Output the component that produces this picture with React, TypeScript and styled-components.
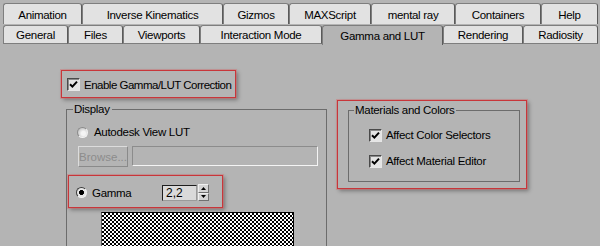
import React from 'react';
import styled, { createGlobalStyle } from 'styled-components';

const GlobalStyle = createGlobalStyle`
  html, body {
    margin: 0;
    padding: 0;
    background: #b4b4b4;
  }
  body {
    font-family: "Liberation Sans", Arial, sans-serif;
    font-size: 11px;
    letter-spacing: -0.3px;
    color: #000;
  }
`;

const Window = styled.div`
  width: 600px;
  height: 246px;
  overflow: hidden;
  box-sizing: border-box;
  padding-top: 3px;
  background: #b4b4b4;
  display: flex;
  flex-direction: column;
`;

const TabRow = styled.div<{ $h: number }>`
  display: flex;
  align-items: flex-end;
  padding-left: 3px;
  height: ${p => p.$h}px;
  flex: none;
  position: relative;
`;

const Tab = styled.div<{ $w: number; $active?: boolean; $bottom?: boolean }>`
  width: ${p => p.$w}px;
  height: ${p => (p.$active ? '100%' : p.$bottom ? 'calc(100% - 1px)' : '100%')};
  box-sizing: border-box;
  display: flex;
  align-items: center;
  justify-content: center;
  padding-top: 1px;
  font-size: 11.5px;
  background: ${p => (p.$active ? '#b4b4b4' : '#e2e2e2')};
  border: 1px solid #7e7e7e;
  border-right-color: #5a5a5a;
  border-bottom: ${p => (p.$bottom && !p.$active ? '1px solid #7e7e7e' : 'none')};
  border-radius: 3px 3px 0 0;
  margin-bottom: ${p => (p.$active ? '-1px' : '0')};
  position: relative;
  z-index: ${p => (p.$active ? 1 : 0)};
  white-space: nowrap;
`;

const Content = styled.div`
  flex: 1;
  display: flex;
  align-items: flex-start;
  padding: 26px 0 0 61px;
`;

const LeftColumn = styled.div`
  width: 266px;
  display: flex;
  flex-direction: column;
`;

const RightColumn = styled.div`
  margin: 30px 0 0 10px;
`;

const Highlight = styled.div<{ $w: number; $h: number }>`
  width: ${p => p.$w}px;
  height: ${p => p.$h}px;
  box-sizing: border-box;
  border: 1px solid #c8363a;
  box-shadow: 0 0 0 1px rgba(214, 110, 112, 0.45), 2px 2px 4px rgba(0, 0, 0, 0.35);
  white-space: nowrap;
`;

const EnableBox = styled(Highlight)`
  display: flex;
  align-items: center;
  gap: 4px;
  padding-left: 5px;
  padding-top: 1px;
  font-size: 11.5px;
  letter-spacing: -0.5px;
`;

const Box = styled.span`
  width: 13px;
  height: 13px;
  flex: none;
  box-sizing: border-box;
  border: 1px solid;
  border-color: #4a4a4a #e6e6e6 #e6e6e6 #4a4a4a;
  background: #e4e4e4;
  box-shadow: inset 1px 1px 0 #8a8a8a;
  display: flex;
  align-items: center;
  justify-content: center;
`;

const Check = () => (
  <Box>
    <svg width="9" height="9" viewBox="0 0 9 9">
      <path d="M1 4.2 L3.4 6.6 L8 1.6" fill="none" stroke="#000" strokeWidth="2" />
    </svg>
  </Box>
);

const RadioDot = styled.span<{ $on?: boolean }>`
  width: 11px;
  height: 11px;
  flex: none;
  box-sizing: border-box;
  border-radius: 50%;
  border: 1px solid ${p => (p.$on ? '#3c3c3c' : '#8c8c8c')};
  border-right-color: #f2f2f2;
  border-bottom-color: #f2f2f2;
  background: ${p =>
    p.$on
      ? 'radial-gradient(circle, #000 0 2.2px, #e8e8e8 2.7px)'
      : 'radial-gradient(circle at 60% 60%, #f4f4f4 0 2px, #cfcfcf 5px)'};
`;

const Group = styled.fieldset<{ $w: number }>`
  width: ${p => p.$w}px;
  box-sizing: border-box;
  margin: 0;
  padding: 0;
  border: 1px solid #6c6c6c;
  min-inline-size: 0;
`;

const Legend = styled.legend`
  margin-left: 5px;
  padding: 0 2px 0 1px;
  line-height: 13px;
  font-size: 11.5px;
`;

const DisplayGroup = styled(Group)`
  margin: 5px 0 0 5px;
  height: 160px;
  padding-left: 1px;
`;

const RadioRow = styled.div`
  display: flex;
  align-items: center;
  gap: 6px;
  height: 16px;
  margin: 8px 0 0 9px;
  font-size: 11.5px;
`;

const BrowseRow = styled.div`
  display: flex;
  align-items: flex-start;
  gap: 4px;
  margin: 6px 0 0 10px;
`;

const BrowseButton = styled.div`
  width: 50px;
  height: 21px;
  box-sizing: border-box;
  border: 1px solid;
  border-color: #dcdcdc #8a8a8a #8a8a8a #dcdcdc;
  color: #8c8c8c;
  font-size: 11.5px;
  display: flex;
  align-items: center;
  justify-content: center;
  letter-spacing: 0;
`;

const PathField = styled.div`
  width: 186px;
  height: 20px;
  box-sizing: border-box;
  border: 1px solid;
  border-color: #8c8c8c #f4f4f4 #f4f4f4 #8c8c8c;
`;

const GammaBox = styled(Highlight)`
  margin: 8px 0 0 0;
  display: flex;
  align-items: center;
  padding: 2px 0 0 7px;
  font-size: 11.5px;
`;

const GammaLabel = styled.span`
  margin-left: 5px;
  width: 70px;
`;

const SpinInput = styled.div`
  width: 35px;
  height: 16px;
  box-sizing: border-box;
  border: 1px solid;
  border-color: #1e1e1e #9a9a9a #9a9a9a #1e1e1e;
  background: #dadada;
  font-size: 12px;
  line-height: 14px;
  padding-left: 3px;
  letter-spacing: 0;
`;

const Spinner = styled.div`
  width: 11px;
  height: 17px;
  margin-left: 1px;
  display: flex;
  flex-direction: column;
`;

const SpinButton = styled.div`
  flex: 1;
  box-sizing: border-box;
  background: #d4d4d4;
  border: 1px solid;
  border-color: #f0f0f0 #707070 #707070 #f0f0f0;
  display: flex;
  align-items: center;
  justify-content: center;
`;

const Checker = styled.div`
  width: 193px;
  height: 40px;
  margin: 4px 0 0 33px;
  box-sizing: border-box;
  border: 1px solid #000;
  border-left-color: #5a5a5a;
  background: repeating-conic-gradient(#000 0% 25%, #fff 0% 50%) 0 0 / 4px 4px;
`;

const MaterialsBox = styled(Highlight)`
  padding: 3px 0 0 10px;
`;

const MaterialsGroup = styled(Group)`
  height: 78px;
`;

const CheckRow = styled.div<{ $top: number }>`
  display: flex;
  align-items: center;
  gap: 4px;
  height: 14px;
  margin: ${p => p.$top}px 0 0 20px;
  font-size: 11.5px;
`;

const Arrow = ({ up }: { up?: boolean }) => (
  <svg width="5" height="3" viewBox="0 0 5 3">
    <path d={up ? 'M0 3 L2.5 0 L5 3 Z' : 'M0 0 L2.5 3 L5 0 Z'} fill="#000" />
  </svg>
);

const topTabs: [string, number][] = [
  ['Animation', 79],
  ['Inverse Kinematics', 141],
  ['Gizmos', 66],
  ['MAXScript', 82],
  ['mental ray', 84],
  ['Containers', 86],
  ['Help', 57],
];

const bottomTabs: [string, number][] = [
  ['General', 65],
  ['Files', 55],
  ['Viewports', 77],
  ['Interaction Mode', 122],
  ['Gamma and LUT', 121],
  ['Rendering', 80],
  ['Radiosity', 75],
];

export default function App() {
  return (
    <>
      <GlobalStyle />
      <Window>
        <TabRow $h={21}>
          {topTabs.map(([label, w]) => (
            <Tab key={label} $w={w}>
              {label}
            </Tab>
          ))}
        </TabRow>
        <TabRow $h={20}>
          {bottomTabs.map(([label, w]) => (
            <Tab key={label} $w={w} $bottom $active={label === 'Gamma and LUT'}>
              {label}
            </Tab>
          ))}
        </TabRow>
        <Content>
          <LeftColumn>
            <EnableBox $w={175} $h={28}>
              <Check />
              Enable Gamma/LUT Correction
            </EnableBox>
            <DisplayGroup $w={261}>
              <Legend>Display</Legend>
              <RadioRow>
                <RadioDot />
                Autodesk View LUT
              </RadioRow>
              <BrowseRow>
                <BrowseButton>Browse...</BrowseButton>
                <PathField />
              </BrowseRow>
              <GammaBox $w={155} $h={33}>
                <RadioDot $on />
                <GammaLabel>Gamma</GammaLabel>
                <SpinInput>2,2</SpinInput>
                <Spinner>
                  <SpinButton>
                    <Arrow up />
                  </SpinButton>
                  <SpinButton>
                    <Arrow />
                  </SpinButton>
                </Spinner>
              </GammaBox>
              <Checker />
            </DisplayGroup>
          </LeftColumn>
          <RightColumn>
            <MaterialsBox $w={190} $h={89}>
              <MaterialsGroup $w={172}>
                <Legend>Materials and Colors</Legend>
                <CheckRow $top={11}>
                  <Check />
                  Affect Color Selectors
                </CheckRow>
                <CheckRow $top={12}>
                  <Check />
                  Affect Material Editor
                </CheckRow>
              </MaterialsGroup>
            </MaterialsBox>
          </RightColumn>
        </Content>
      </Window>
    </>
  );
}
